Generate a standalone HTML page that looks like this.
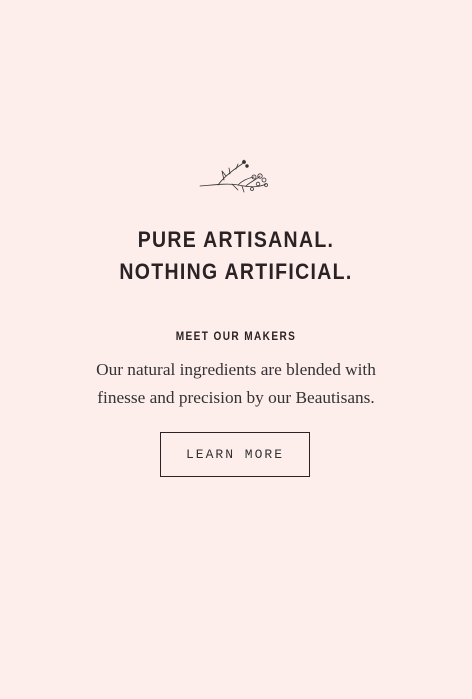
<!DOCTYPE html>
<html><head><style>
html,body{margin:0;padding:0}
body{width:472px;height:699px;background:#fdeeec;position:relative;overflow:hidden;color:#2a2224}
.h{position:absolute;left:0;width:472px;top:224px;text-align:center;font-family:"Liberation Sans",sans-serif;font-weight:bold;font-size:22px;line-height:32px;letter-spacing:1.5px;transform:scaleX(0.885);transform-origin:236px 0}
.m{position:absolute;left:0;width:472px;top:331px;text-align:center;font-family:"Liberation Sans",sans-serif;font-weight:bold;font-size:11.5px;letter-spacing:1.6px;transform:scaleX(0.875);transform-origin:236px 0}
.p{position:absolute;left:0;width:472px;top:356px;text-align:center;font-family:"Liberation Serif",serif;font-size:17.3px;line-height:28px;color:#333}
.b{position:absolute;left:160px;top:432px;width:148px;height:43px;border:1px solid #2a2224;text-align:center;line-height:43px;font-family:"Liberation Mono",monospace;font-size:13px;letter-spacing:2px;color:#333}
svg{position:absolute;left:198px;top:158px}
</style></head><body>
<svg width="76" height="42" viewBox="0 0 76 42" fill="none" stroke="#333" stroke-width="0.8" stroke-linecap="round">
<path d="M2 28 C15 27 30 25 40 27 C50 29 60 30 68 26"/>
<path d="M20 27 C25 20 32 14 44 6"/>
<path d="M26 22 L24 13 M24 13 L28 18"/>
<path d="M32 16 L31 10"/>
<path d="M38 11 L40 6 M44 6 L46 2"/>
<circle cx="46" cy="4" r="1.5" fill="#333"/><circle cx="49" cy="8" r="1.3" fill="#333"/>
<path d="M40 27 C45 22 50 20 56 19"/>
<path d="M48 28 C52 24 58 22 62 18"/>
<circle cx="56" cy="19" r="2"/><circle cx="62" cy="18" r="2.2"/><circle cx="66" cy="22" r="2"/><circle cx="60" cy="26" r="1.8"/><circle cx="68" cy="27" r="1.5"/><circle cx="54" cy="31" r="1.5"/>
<path d="M34 26 L40 32 M44 28 L46 34"/>
</svg>
<div class="h">PURE ARTISANAL.<br>NOTHING ARTIFICIAL.</div>
<div class="m">MEET OUR MAKERS</div>
<div class="p">Our natural ingredients are blended with<br>finesse and precision by our Beautisans.</div>
<div class="b">LEARN MORE</div>
</body></html>
